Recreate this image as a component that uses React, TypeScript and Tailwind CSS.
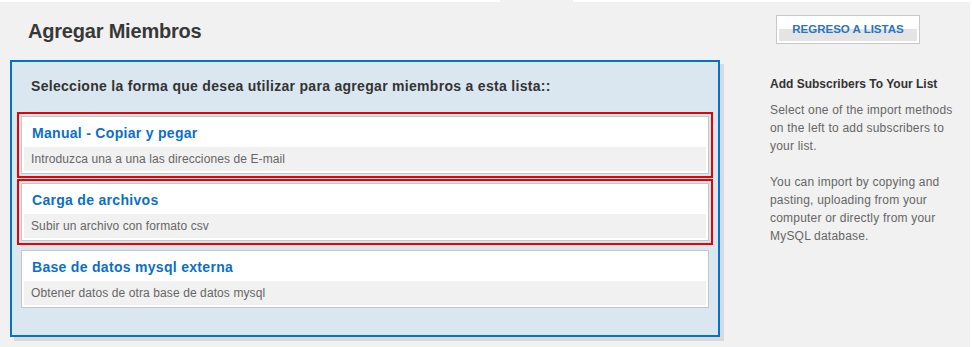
const methods = [
  { title: 'Manual - Copiar y pegar', desc: 'Introduzca una a una las direcciones de E-mail', marked: true },
  { title: 'Carga de archivos', desc: 'Subir un archivo con formato csv', marked: true },
  { title: 'Base de datos mysql externa', desc: 'Obtener datos de otra base de datos mysql', marked: false },
];

function MethodCard({ title, desc, marked }: { title: string; desc: string; marked: boolean }) {
  return (
    <div
      className={
        marked
          ? 'border border-[#c6c6c6] bg-white p-[2px] outline-2 outline-offset-2 outline-[#ee0000]'
          : 'border border-[#c6c6c6] bg-white p-[2px]'
      }
    >
      <div className="h-[28px] flex items-center px-2 text-[14px] font-bold text-[#0b6fc7] tracking-[0.3px]">
        {title}
      </div>
      <div className="h-[24px] flex items-center px-[7px] bg-[#f1f1f1] text-[12px] text-[#666] tracking-[0.1px]">
        {desc}
      </div>
    </div>
  );
}

export default function App() {
  return (
    <div className="w-[972px] h-[347px] bg-white font-['Liberation_Sans',Arial,sans-serif] overflow-hidden">
      <div className="flex h-[2px]">
        <div className="w-[500px]" />
        <div className="w-[73px] bg-[#f1f1f1]" />
      </div>
      <div className="w-[970px] h-[345px] bg-[#f1f1f1] flex">
        <div className="w-[724px] pl-[10px]">
          <div className="h-[58px] flex items-center pl-[18px] text-[20px] font-bold text-[#383838] tracking-[-0.2px]">
            Agregar Miembros
          </div>
          <div className="w-[710px] h-[277px] border-2 border-[#0074cc] bg-[#dbe7f0] shadow-[4px_4px_0_#d9d9d9] px-[9px]">
            <div className="h-[48px] flex items-center pl-[10px] text-[14px] font-bold text-[#333] tracking-[0.3px]">
              Seleccione la forma que desea utilizar para agregar miembros a esta lista::
            </div>
            <div className="flex flex-col gap-[9px] mt-[6px]">
              {methods.map((m) => (
                <MethodCard key={m.title} {...m} />
              ))}
            </div>
          </div>
        </div>
        <div className="ml-[46px] w-[196px]">
          <button className="mt-[13px] ml-[6px] w-[144px] h-[29px] border border-[#c8c8c8] bg-white p-[2px] block">
            <span className="flex h-full items-center justify-center bg-[linear-gradient(to_bottom,#ffffff_50%,#e4e4e4_50%)] text-[11.5px] font-bold text-[#2a73c4]">
              REGRESO A LISTAS
            </span>
          </button>
          <div className="mt-[31px] text-[12px] leading-[18px] font-bold text-[#333]">
            Add Subscribers To Your List
          </div>
          <p className="mt-[8px] text-[12px] leading-[18px] text-[#666] tracking-[0.2px]">
            Select one of the import methods on the left to add subscribers to your list.
          </p>
          <p className="mt-[18px] text-[12px] leading-[18px] text-[#666] tracking-[0.2px]">
            You can import by copying and pasting, uploading from your computer or directly from your MySQL database.
          </p>
        </div>
      </div>
    </div>
  );
}
